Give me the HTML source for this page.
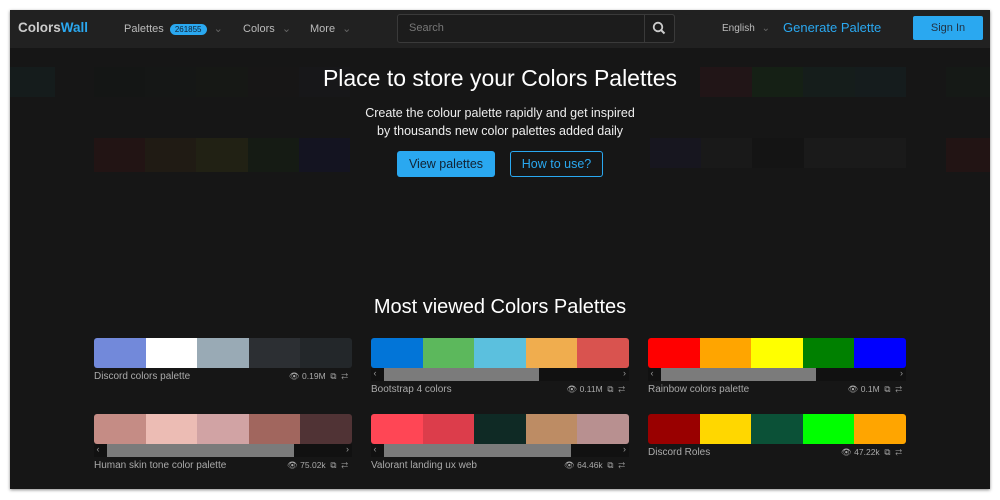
<!DOCTYPE html><html><head><style>
*{margin:0;padding:0;box-sizing:border-box}
body{width:1000px;height:500px;background:#fff;font-family:"Liberation Sans",sans-serif;position:relative;overflow:hidden}
.frame{position:absolute;left:10px;top:10px;width:980px;height:479px;background:#161616;overflow:hidden;box-shadow:0 1px 3px #888}
.hdr{position:absolute;left:0;top:0;width:980px;height:38px;background:#212121}
.a{position:absolute;color:#bbb;font-size:11px}
.bg{position:absolute;opacity:.07;display:flex}
.bg div{flex:1}
.card{position:absolute;width:258px}
.pal{display:flex;height:30px;border-radius:3px;overflow:hidden}
.pal div{flex:1}
.sb{height:13px;background:#111;position:relative;color:#999;font-size:9px}
.sb .t{position:absolute;left:13px;top:0;height:13px;background:#7b7b7b}
.lbl{color:#aaa;font-size:10px;margin-top:3px;position:relative;height:14px}
.st{position:absolute;right:4px;top:0;font-size:8.5px;color:#aaa}
</style></head><body>
<div class="frame">
<div class="bg" style="left:-10px;top:57px;width:55px;height:30px"><div style="background:#0a7070"></div></div>
<div class="bg" style="left:84px;top:57px;width:256px;height:30px"><div style="background:#072010"></div><div style="background:#103020"></div><div style="background:#203a10"></div><div style="background:#302020"></div><div style="background:#303040"></div></div>
<div class="bg" style="left:84px;top:128px;width:256px;height:34px"><div style="background:#c00000"></div><div style="background:#a06000"></div><div style="background:#b0b000"></div><div style="background:#106000"></div><div style="background:#0000b0"></div></div>
<div class="bg" style="left:690px;top:57px;width:206px;height:30px"><div style="background:#b01030"></div><div style="background:#10a010"></div><div style="background:#108060"></div><div style="background:#0a7080"></div></div>
<div class="bg" style="left:640px;top:128px;width:256px;height:30px"><div style="background:#302090"></div><div style="background:#444"></div><div style="background:#000"></div><div style="background:#555"></div><div style="background:#555"></div></div>
<div class="bg" style="left:936px;top:57px;width:50px;height:30px"><div style="background:#104020"></div></div>
<div class="bg" style="left:936px;top:128px;width:50px;height:34px"><div style="background:#c00000"></div></div>
<div class="hdr"></div>
<div class="a" style="left:8px;top:10px;font-size:13.5px;font-weight:bold;color:#ccc">Colors<span style="color:#2aa8f0">Wall</span></div>
<div class="a" style="left:114px;top:12px">Palettes <span style="background:#2aa8f0;color:#123;font-size:8px;border-radius:7px;padding:1px 5px;margin-left:3px">261855</span> <span style="color:#666;margin-left:4px">⌄</span></div>
<div class="a" style="left:233px;top:12px">Colors <span style="color:#666;margin-left:4px">⌄</span></div>
<div class="a" style="left:300px;top:12px">More <span style="color:#666;margin-left:4px">⌄</span></div>
<div style="position:absolute;left:387px;top:4px;width:278px;height:29px;border:1px solid #3a3a3a;border-radius:3px;background:#1c1c1c"></div>
<div class="a" style="left:399px;top:12px;color:#777">Search</div>
<div style="position:absolute;left:634px;top:4px;width:31px;height:29px;border:1px solid #3a3a3a;border-radius:0 3px 3px 0"></div>
<svg style="position:absolute;left:642px;top:11px" width="14" height="14" viewBox="0 0 14 14"><circle cx="6" cy="6" r="4.3" stroke="#ccc" stroke-width="1.8" fill="none"/><path d="M9 9l3.5 3.5" stroke="#ccc" stroke-width="2"/></svg>
<div class="a" style="left:712px;top:13px;font-size:10px">English <span style="color:#666;margin-left:4px">⌄</span></div>
<div class="a" style="left:773px;top:10px;font-size:13px;color:#2aa8f0">Generate Palette</div>
<div style="position:absolute;left:903px;top:6px;width:70px;height:24px;background:#2aa8f0;border-radius:2px;color:#234;font-size:11px;text-align:center;line-height:24px">Sign In</div>
<div style="position:absolute;left:0;width:980px;top:55px;text-align:center;color:#fff;font-size:23px">Place to store your Colors Palettes</div>
<div style="position:absolute;left:0;width:980px;top:95px;text-align:center;color:#eee;font-size:12.5px;line-height:17.5px">Create the colour palette rapidly and get inspired<br>by thousands new color palettes added daily</div>
<div style="position:absolute;left:387px;top:141px;width:98px;height:26px;background:#2aa8f0;border-radius:3px;color:#123;font-size:12.5px;text-align:center;line-height:26px">View palettes</div>
<div style="position:absolute;left:500px;top:141px;width:93px;height:26px;border:1px solid #2aa8f0;border-radius:3px;color:#2aa8f0;font-size:12.5px;text-align:center;line-height:24px">How to use?</div>
<div style="position:absolute;left:0;width:980px;top:286px;text-align:center;color:#fff;font-size:20px">Most viewed Colors Palettes</div>

<div class="card" style="left:84px;top:328px"><div class="pal"><div style="background:#7289da"></div><div style="background:#fff"></div><div style="background:#99aab5"></div><div style="background:#2c2f33"></div><div style="background:#23272a"></div></div><div class="lbl">Discord colors palette<span class="st">👁 0.19M &nbsp;⧉ &nbsp;⇄</span></div></div>
<div class="card" style="left:361px;top:328px"><div class="pal"><div style="background:#0275d8"></div><div style="background:#5cb85c"></div><div style="background:#5bc0de"></div><div style="background:#f0ad4e"></div><div style="background:#d9534f"></div></div><div class="sb">&nbsp;‹<div class="t" style="width:155px"></div><span style="position:absolute;right:3px">›</span></div><div class="lbl">Bootstrap 4 colors<span class="st">👁 0.11M &nbsp;⧉ &nbsp;⇄</span></div></div>
<div class="card" style="left:638px;top:328px"><div class="pal"><div style="background:#f00"></div><div style="background:#ffa500"></div><div style="background:#ff0"></div><div style="background:#008000"></div><div style="background:#00f"></div></div><div class="sb">&nbsp;‹<div class="t" style="width:155px"></div><span style="position:absolute;right:3px">›</span></div><div class="lbl">Rainbow colors palette<span class="st">👁 0.1M &nbsp;⧉ &nbsp;⇄</span></div></div>
<div class="card" style="left:84px;top:404px"><div class="pal"><div style="background:#c58c85"></div><div style="background:#ecbcb4"></div><div style="background:#d1a3a4"></div><div style="background:#a1665e"></div><div style="background:#503335"></div></div><div class="sb">&nbsp;‹<div class="t" style="width:187px"></div><span style="position:absolute;right:3px">›</span></div><div class="lbl">Human skin tone color palette<span class="st">👁 75.02k &nbsp;⧉ &nbsp;⇄</span></div></div>
<div class="card" style="left:361px;top:404px"><div class="pal"><div style="background:#ff4655"></div><div style="background:#dc3d4b"></div><div style="background:#0f2a25"></div><div style="background:#bd8c64"></div><div style="background:#b89090"></div></div><div class="sb">&nbsp;‹<div class="t" style="width:187px"></div><span style="position:absolute;right:3px">›</span></div><div class="lbl">Valorant landing ux web<span class="st">👁 64.46k &nbsp;⧉ &nbsp;⇄</span></div></div>
<div class="card" style="left:638px;top:404px"><div class="pal"><div style="background:#990000"></div><div style="background:#ffd700"></div><div style="background:#0b5137"></div><div style="background:#00ff00"></div><div style="background:#ffa500"></div></div><div class="lbl">Discord Roles<span class="st">👁 47.22k &nbsp;⧉ &nbsp;⇄</span></div></div>
</div>
</body></html>
